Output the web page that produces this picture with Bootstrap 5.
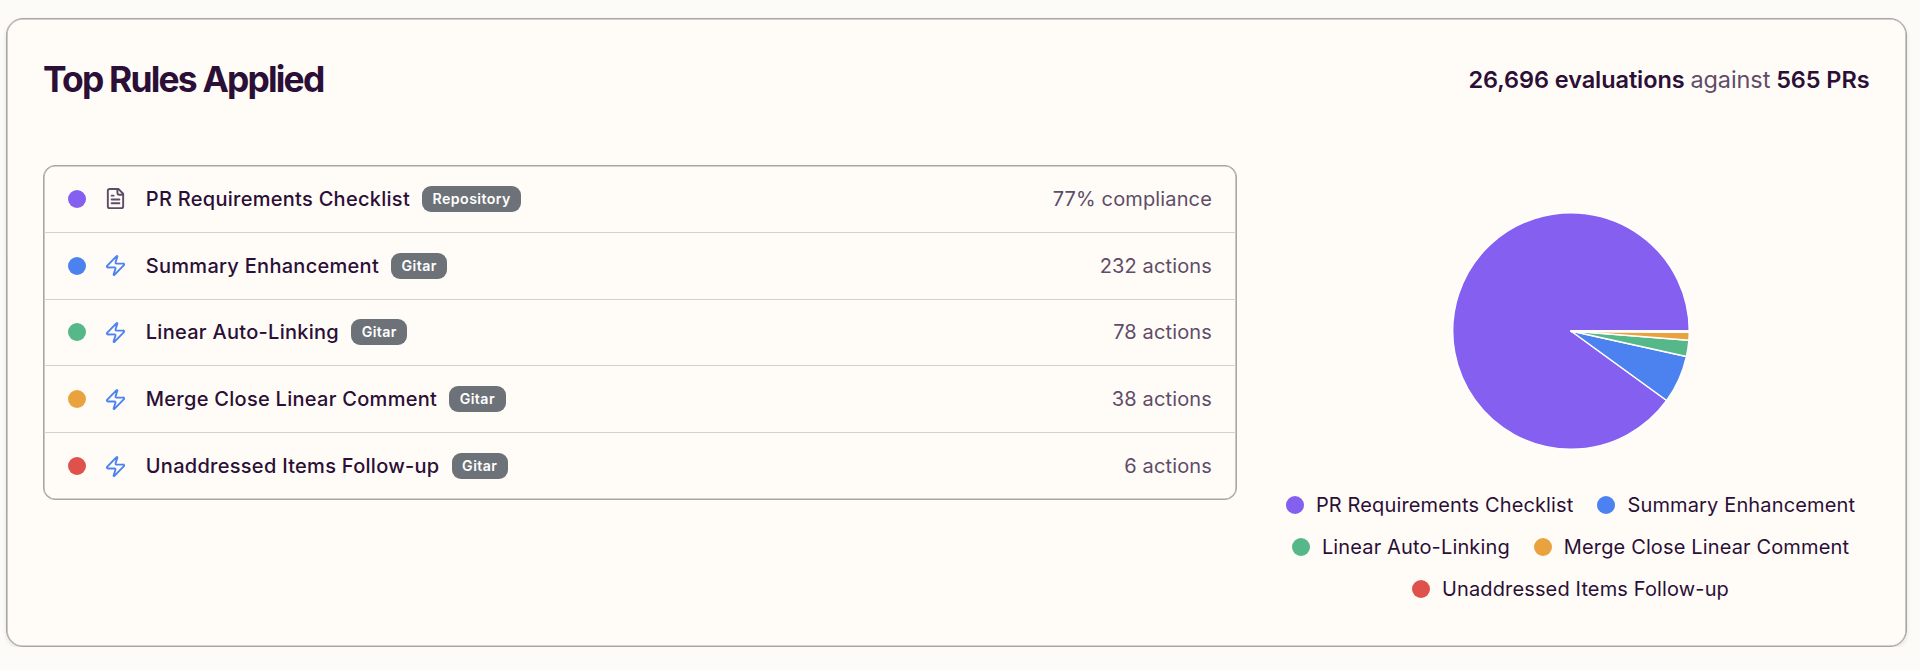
<!DOCTYPE html>
<html lang="en">
<head>
<meta charset="utf-8">
<title>Top Rules Applied</title>
<meta name="viewport" content="width=device-width, initial-scale=1">
<link href="https://cdn.jsdelivr.net/npm/bootstrap@5.3.0/dist/css/bootstrap.min.css" rel="stylesheet">
<style>
body{background:#fcfbf8;color:#2b0f36;font-family:Inter,"Liberation Sans",sans-serif;font-size:20px;line-height:28px;letter-spacing:.14px;overflow:hidden}
.panel{margin:18px 13px 0 6px;height:629px;background:#fffcf8;border:1px solid #a6a6a5;border-radius:17px;padding:0 36px;box-shadow:inset 0 0 0 .6px #a6a6a5,0 2px 4px rgba(0,0,0,.1);color:inherit}
.panel-head{height:122px}
h2{font-size:35.4px;font-weight:700;letter-spacing:-1.8px;line-height:44px}
.summary{font-size:23.5px;font-weight:600;letter-spacing:-.08px;padding-right:.5px}
.soft{color:#5f4c68;font-weight:400}
.rules{width:1194px;flex:none;margin-top:24px;border:1px solid #a6a6a5;border-radius:12px;box-shadow:inset 0 0 0 .6px #a6a6a5}
.rule{height:66.8px;padding:0 24px;border-bottom:1px solid #d2d1cf}
.rule:last-child{border-bottom:0;height:66px}
.dot{width:18px;height:18px;border-radius:50%;flex:none}
.glyph{width:23px;height:23px;margin:0 18.6px 0 18.2px;flex:none}
.rule-name{font-weight:500;letter-spacing:.28px}
.tag{background:#6d7278;color:#fff;font-size:14.2px;font-weight:600;height:26px;line-height:25px;border-radius:9px;padding:0 10.6px;margin-left:12px;letter-spacing:.4px}
.chart{width:600px;margin-left:34px;padding-top:71px}
.legend-block{margin-top:34.3px}
.legend-line{height:41.7px;gap:24px}
.legend-line span{gap:12px}
.violet{background:#855fef}.blue{background:#4c82f0}.green{background:#56b788}.amber{background:#e9a33e}.red{background:#df524c}
</style>
</head>
<body>
<svg class="d-none">
<symbol id="bolt" viewBox="0 0 24 24"><path d="M4 14a1 1 0 0 1-.78-1.63l9.9-10.2a.5.5 0 0 1 .86.46l-1.92 6.02A1 1 0 0 0 13 10h7a1 1 0 0 1 .78 1.63l-9.9 10.2a.5.5 0 0 1-.86-.46l1.92-6.02A1 1 0 0 0 11 14z" fill="none" stroke="#4c82f0" stroke-width="2" stroke-linejoin="round"/></symbol>
</svg>
<main class="panel card">
<header class="panel-head d-flex justify-content-between align-items-center">
<h2 class="mb-0">Top Rules Applied</h2>
<div class="summary"><span>26,696 evaluations</span> <span class="soft">against</span> <span>565 PRs</span></div>
</header>
<div class="d-flex align-items-start">
<section class="rules">
<div class="rule d-flex align-items-center"><i class="dot violet"></i><svg class="glyph" viewBox="0 0 24 24" fill="none" stroke="#5f4c68" stroke-width="2" stroke-linecap="round" stroke-linejoin="round"><path d="M15 2H6a2 2 0 0 0-2 2v16a2 2 0 0 0 2 2h12a2 2 0 0 0 2-2V7zM14 2v4a2 2 0 0 0 2 2h4M10 9H8M16 13H8M16 17H8"/></svg><span class="rule-name">PR Requirements Checklist</span><span class="tag">Repository</span><span class="soft ms-auto">77% compliance</span></div>
<div class="rule d-flex align-items-center"><i class="dot blue"></i><svg class="glyph"><use href="#bolt"/></svg><span class="rule-name">Summary Enhancement</span><span class="tag">Gitar</span><span class="soft ms-auto">232 actions</span></div>
<div class="rule d-flex align-items-center"><i class="dot green"></i><svg class="glyph"><use href="#bolt"/></svg><span class="rule-name">Linear Auto-Linking</span><span class="tag">Gitar</span><span class="soft ms-auto">78 actions</span></div>
<div class="rule d-flex align-items-center"><i class="dot amber"></i><svg class="glyph"><use href="#bolt"/></svg><span class="rule-name">Merge Close Linear Comment</span><span class="tag">Gitar</span><span class="soft ms-auto">38 actions</span></div>
<div class="rule d-flex align-items-center"><i class="dot red"></i><svg class="glyph"><use href="#bolt"/></svg><span class="rule-name">Unaddressed Items Follow-up</span><span class="tag">Gitar</span><span class="soft ms-auto">6 actions</span></div>
</section>
<section class="chart d-flex flex-column align-items-center">
<svg width="238" height="238" viewBox="-119 -119 238 238" stroke="#fff" stroke-width="1.5" stroke-linejoin="round">
<path fill="#855fef" d="M0 0L118.3 0A118.3 118.3 0 1 0 95.7 69.5Z"/>
<path fill="#4c82f0" d="M0 0L95.7 69.5A118.3 118.3 0 0 0 115.5 25.4Z"/>
<path fill="#56b788" d="M0 0L115.5 25.4A118.3 118.3 0 0 0 117.9 9.2Z"/>
<path fill="#e9a33e" d="M0 0L117.9 9.2A118.3 118.3 0 0 0 118.3 1.3Z"/>
<path fill="#df524c" d="M0 0L118.3 1.3A118.3 118.3 0 0 0 118.3 0Z"/>
<path fill="none" d="M0 .6H118.3" stroke-width="2"/>
</svg>
<div class="legend-block w-100">
<div class="legend-line d-flex justify-content-center align-items-center"><span class="d-flex align-items-center"><i class="dot violet"></i>PR Requirements Checklist</span><span class="d-flex align-items-center"><i class="dot blue"></i>Summary Enhancement</span></div>
<div class="legend-line d-flex justify-content-center align-items-center"><span class="d-flex align-items-center"><i class="dot green"></i>Linear Auto-Linking</span><span class="d-flex align-items-center"><i class="dot amber"></i>Merge Close Linear Comment</span></div>
<div class="legend-line d-flex justify-content-center align-items-center"><span class="d-flex align-items-center"><i class="dot red"></i>Unaddressed Items Follow-up</span></div>
</div>
</section>
</div>
</main>
<script src="https://cdn.jsdelivr.net/npm/bootstrap@5.3.0/dist/js/bootstrap.bundle.min.js"></script>
</body>
</html>
